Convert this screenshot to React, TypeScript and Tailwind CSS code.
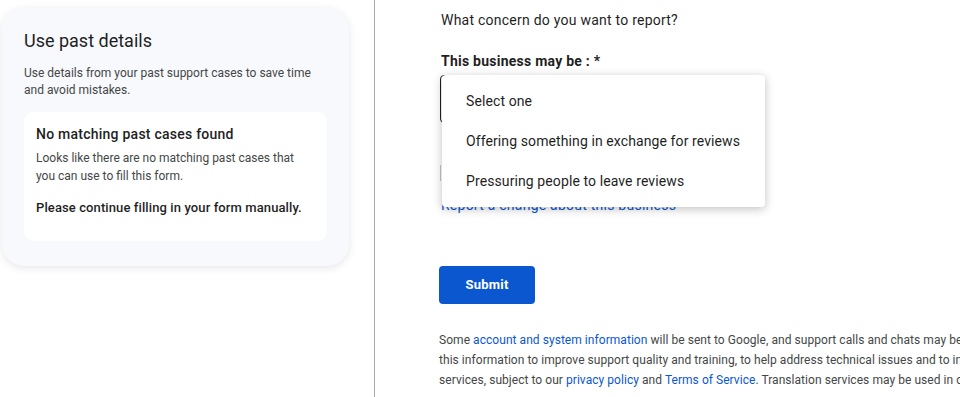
import React from "react";

export default function App() {
  return (
    <div
      className="w-[960px] h-[397px] overflow-hidden bg-white flex text-[#1f1f1f] tracking-[0.015em]"
      style={{ fontFamily: "Roboto, 'Noto Sans', Arial, sans-serif" }}
    >
      {/* Left column */}
      <div className="w-[374px] shrink-0 pl-[2px] pt-[8px]">
        <div className="w-[347px] h-[258px] rounded-[22px] bg-[#f8f9fd] shadow-[0_2px_8px_rgba(0,0,0,0.10)] px-[22px] pt-[21px]">
          <div className="text-[18px] leading-[24px] text-[#1f1f1f] tracking-normal">Use past details</div>
          <div className="mt-[12px] text-[12px] leading-[17px] text-[#444746] tracking-normal">
            Use details from your past support cases to save time and avoid mistakes.
          </div>
          <div className="mt-[13px] bg-white rounded-[10px] h-[129px] px-[12px] pt-[13px]">
            <div className="text-[14px] leading-[18px] font-medium text-[#1f1f1f]">
              No matching past cases found
            </div>
            <div className="mt-[6px] text-[12px] leading-[18px] text-[#444746] tracking-normal">
              Looks like there are no matching past cases that you can use to fill this form.
            </div>
            <div className="mt-[14px] text-[13px] leading-[18px] font-medium text-[#1f1f1f] tracking-[0.008em]">
              Please continue filling in your form manually.
            </div>
          </div>
        </div>
      </div>

      {/* Divider */}
      <div className="w-px h-full bg-[#a8a8a8] shrink-0" />

      {/* Right column */}
      <div className="relative flex-1 pl-[64px] pt-[10px] whitespace-nowrap">
        <div className="pl-[2px] text-[14px] leading-[20px] text-[#1f1f1f]">
          What concern do you want to report?
        </div>
        <div className="mt-[21px] pl-[2px] text-[14px] leading-[20px] font-bold text-[#1f1f1f]">
          This business may be : *
        </div>
        <div className="mt-[4px] ml-[1px] w-[324px] h-[48px] rounded-[4px] border border-[#1f1f1f]" />
        <div className="mt-[42px] ml-[1px] w-[324px] h-[16px] border-l border-[#c4c7c5]" />
        <div className="mt-[16px] pl-[2px] text-[14px] leading-[16px] text-[#0b57d0]">
          Report a change about this business
        </div>
        <button className="mt-[53px] w-[96px] h-[38px] rounded-[4px] bg-[#0b57d0] text-white text-[13px] font-bold">
          Submit
        </button>
        <div className="mt-[26px] text-[12px] leading-[20px] text-[#444746] tracking-[0.05px]">
          <div>
            Some <span className="text-[#0b57d0]">account and system information</span> will be sent to Google, and support calls and chats may be recorded.
          </div>
          <div>
            this information to improve support quality and training, to help address technical issues and to improve
          </div>
          <div>
            services, subject to our <span className="text-[#0b57d0]">privacy policy</span> and{" "}
            <span className="text-[#0b57d0]">Terms of Service</span>. Translation services may be used in chats.
          </div>
        </div>

        {/* Dropdown menu overlay */}
        <div className="absolute left-[67px] top-[75px] w-[323px] h-[132px] bg-white rounded-[4px] shadow-[0_2px_10px_rgba(0,0,0,0.25)] pt-[6px] text-[14px] text-[#1f1f1f] tracking-[0.1px]">
          <div className="h-[40px] flex items-center pl-[24px]">Select one</div>
          <div className="h-[40px] flex items-center pl-[24px]">Offering something in exchange for reviews</div>
          <div className="h-[40px] flex items-center pl-[24px]">Pressuring people to leave reviews</div>
        </div>
      </div>
    </div>
  );
}
